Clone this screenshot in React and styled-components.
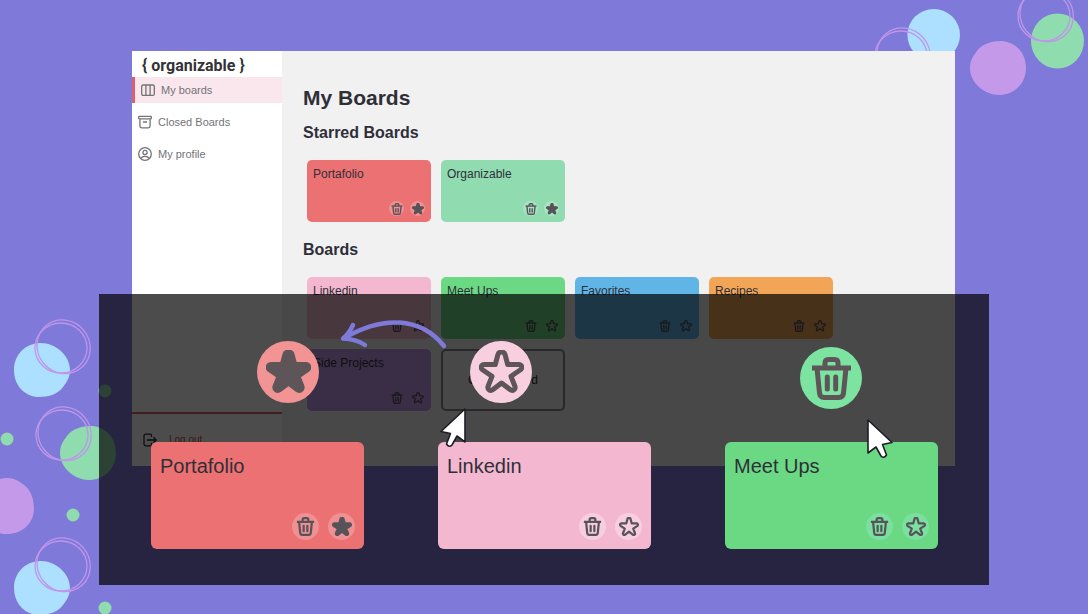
import React from "react";
import styled, { createGlobalStyle, css } from "styled-components";

const GlobalStyle = createGlobalStyle`
  *, *::before, *::after { box-sizing: border-box; }
  body {
    margin: 0;
    background: #7f79d9;
    color: #2f2f38;
    font-family: "Liberation Sans", Arial, sans-serif;
  }
  h1, h2, h3, p { margin: 0; }
`;

const Stage = styled.div`
  position: relative;
  min-height: 100vh;
  padding: 51px 133px 0 132px;
  overflow: hidden;
  background: #7f79d9;
`;

const LeftBubbles = styled.svg`
  position: absolute;
  top: 0;
  left: 0;
`;

const RightBubbles = styled.svg`
  position: absolute;
  top: 0;
  right: 0;
`;

const Window = styled.div`
  position: relative;
  display: flex;
  background: #f1f1f1;
`;

const Sidebar = styled.aside`
  display: flex;
  flex-direction: column;
  flex: 0 0 150px;
  background: #fff;
`;

const Logo = styled.p`
  height: 26px;
  padding: 2px 0 0 10px;
  color: #333336;
  font: 700 16px/26px Roboto, "Liberation Sans", sans-serif;
`;

const Nav = styled.nav`
  display: flex;
  flex-direction: column;
  gap: 6px;
`;

const NavLink = styled.a`
  display: flex;
  align-items: center;
  gap: 6px;
  height: 26px;
  padding-left: 6px;
  color: #737377;
  font-size: 11px;
  line-height: 16px;
  text-decoration: none;
  ${(p) =>
    p.$active &&
    css`
      border-left: 3px solid #dc6069;
      background: #fae7ee;
    `}
`;

const SidebarFooter = styled.div`
  margin-top: auto;
  height: 54px;
  padding: 18px 11px;
  border-top: 2px solid #e0606a;
`;

const LogoutLink = styled.a`
  display: flex;
  align-items: center;
  gap: 12px;
  color: #c9505c;
  font-size: 10px;
  line-height: 16px;
  text-decoration: none;
  svg { color: #2d2d38; }
`;

const Main = styled.main`
  flex: 1;
  min-width: 0;
  padding: 34px 21px 55px;
`;

const PageTitle = styled.h1`
  font-size: 21px;
  line-height: 26px;
  margin-bottom: 12px;
`;

const Section = styled.section`
  & + & { margin-top: 18px; }
`;

const SectionTitle = styled.h2`
  font-size: 16px;
  line-height: 20px;
  margin-bottom: 17px;
`;

const BoardGrid = styled.div`
  display: grid;
  grid-template-columns: repeat(auto-fill, 124px);
  gap: 10px;
  padding-left: 4px;
`;

const Card = styled.article`
  position: relative;
  display: flex;
  flex-direction: column;
  justify-content: space-between;
  height: ${(p) => (p.$large ? 107 : 62)}px;
  padding: ${(p) => (p.$large ? "12px 9px 9px" : "6px")};
  border-radius: ${(p) => (p.$large ? 6 : 5)}px;
  background: ${(p) => p.$color};
`;

const CardTitle = styled.h3`
  font-weight: 400;
  font-size: ${(p) => (p.$large ? 20 : 12)}px;
  line-height: ${(p) => (p.$large ? 24 : 16)}px;
`;

const CardActions = styled.div`
  display: flex;
  justify-content: flex-end;
  gap: ${(p) => (p.$large ? 9 : 6)}px;
`;

const IconButton = styled.button`
  display: grid;
  place-items: center;
  width: ${(p) => (p.$large ? 27 : 15)}px;
  height: ${(p) => (p.$large ? 27 : 15)}px;
  padding: 0;
  border: 0;
  border-radius: 50%;
  background: ${(p) => p.$halo};
  color: #57535a;
`;

const CreateButton = styled.button`
  height: 62px;
  border: 2px solid #86868c;
  border-radius: 5px;
  background: transparent;
  color: #2d2d38;
  font: 12px/16px "Liberation Sans", Arial, sans-serif;
`;

const Spotlight = styled.section`
  position: absolute;
  top: 294px;
  left: 99px;
  right: 99px;
  padding: 148px 51px 36px 52px;
  background: rgba(0, 0, 0, 0.7);
`;

const SpotlightRow = styled.div`
  display: grid;
  grid-template-columns: repeat(3, 1fr);
  gap: 74px;
`;

const Badge = styled.span`
  position: absolute;
  left: ${(p) => p.$left}px;
  bottom: ${(p) => p.$bottom}px;
  display: grid;
  place-items: center;
  width: 62px;
  height: 62px;
  border-radius: 50%;
  background: ${(p) => p.$color};
  color: #5d5558;
`;

const Cursor = styled.svg`
  position: absolute;
  top: ${(p) => p.$top}px;
  left: ${(p) => p.$left}px;
  overflow: visible;
`;

const Arrow = styled.svg`
  position: absolute;
  top: 20px;
  left: 236px;
`;

function StarIcon({ size, filled }) {
  return (
    <svg width={size} height={size} viewBox="0 1.500 45 45" aria-hidden="true">
      <path
        d="M19 5.800C20 2.800 25 2.800 26 5.800L28.700 16L39.500 16C43 16.200 43.800 19.500 41.500 21.300L32 27.800L36 38C36.800 41.300 33.500 43 31 41L22.500 34.500L14 41C11.500 43 8.200 41.300 9 38L13 27.800L3.500 21.300C1.200 19.500 2 16.200 5.500 16L16.300 16Z"
        fill={filled ? "currentColor" : "none"}
        stroke="currentColor"
        strokeWidth="5"
        strokeLinejoin="round"
      />
    </svg>
  );
}

function TrashIcon({ size }) {
  return (
    <svg width={size} height={size} viewBox="-2 0 43 43" fill="none" stroke="currentColor" strokeWidth="5" aria-hidden="true">
      <path d="M0 11H39" />
      <path d="M13 11V6Q13 2.500 16.500 2.500H22.500Q26 2.500 26 6V11" />
      <path d="M5 11L7.500 36Q8 40.500 12 40.500H27Q31 40.500 31.500 36L34 11" />
      <path d="M15.300 20V32M23.700 20V32" strokeLinecap="round" />
    </svg>
  );
}

function BoardsIcon() {
  return (
    <svg width="14" height="14" viewBox="0 0 14 14" fill="none" stroke="currentColor" strokeWidth="1.3" aria-hidden="true">
      <rect x="0.7" y="2" width="12.600" height="10.400" rx="1.500" />
      <path d="M4.900 2V12M9.100 2V12" />
    </svg>
  );
}

function ArchiveIcon() {
  return (
    <svg width="14" height="14" viewBox="0 0 14 14" fill="none" stroke="currentColor" strokeWidth="1.3" aria-hidden="true">
      <rect x="0.7" y="1.300" width="12.600" height="2.600" rx="0.600" />
      <path d="M1.900 4.200V11Q1.900 12.800 3.700 12.800H10.300Q12.100 12.800 12.100 11V4.200M5 7H9" />
    </svg>
  );
}

function ProfileIcon() {
  return (
    <svg width="14" height="14" viewBox="0 0 14 14" fill="none" stroke="currentColor" strokeWidth="1.3" aria-hidden="true">
      <circle cx="7" cy="7" r="6.300" />
      <circle cx="7" cy="5.500" r="2.100" />
      <path d="M2.800 11.300Q4 9.300 7 9.300Q10 9.300 11.200 11.300" />
    </svg>
  );
}

function LogoutIcon() {
  return (
    <svg width="14" height="14" viewBox="0 0 14 14" fill="none" stroke="currentColor" strokeWidth="1.3" aria-hidden="true">
      <path d="M8.500 4V2.700Q8.500 1.200 7 1.200H2.800Q1 1.200 1 3V11Q1 12.800 2.800 12.800H7Q8.500 12.800 8.500 11.300V10M4 7H13M10.500 4.300L13.200 7L10.500 9.700" />
    </svg>
  );
}

function Pointer({ flip, top, left }) {
  return (
    <Cursor $top={top} $left={left} width="26" height="40" viewBox="0 0 26 40" aria-hidden="true">
      <path
        transform={flip ? "translate(26 0) scale(-1 1)" : undefined}
        d="M1 1V34L9 28L14 37Q17 40 19.500 36L15.500 25.500L25 23.500Z"
        fill="#fff"
        stroke="#1d1d26"
        strokeWidth="1.6"
        strokeLinejoin="round"
      />
    </Cursor>
  );
}

const BLOB =
  "M-2-27C13-27.500 28-15 28 0C28 7 25 12 21 17C16 24 7 27-4 27C-18 26-28 15-28 0C-28-15-17-26.500-2-27Z";

function Blob({ x, y, turn = 0, color }) {
  return <path d={BLOB} transform={`translate(${x} ${y}) rotate(${turn})`} fill={color} />;
}

function Rings({ x, y }) {
  return (
    <g fill="none" stroke="#bf96ea" strokeWidth="1.3">
      <ellipse cx={x - 2} cy={y + 2} rx="26" ry="25" />
      <ellipse cx={x + 1} cy={y} rx="27.500" ry="26" transform={`rotate(50 ${x} ${y})`} />
    </g>
  );
}

const BLUE = "#ade0ff";
const MINT = "#8fdcaf";
const LILAC = "#c499ea";

const starred = [
  { name: "Portafolio", color: "#ec7173" },
  { name: "Organizable", color: "#90dcb0" },
];

const boards = [
  { name: "Linkedin", color: "#f3b8d0" },
  { name: "Meet Ups", color: "#6bd984" },
  { name: "Favorites", color: "#61b4e6" },
  { name: "Recipes", color: "#f2a556" },
  { name: "Side Projects", color: "#c39aeb" },
];

function BoardCard({ name, color, filled, large, halo = "transparent", children }) {
  return (
    <Card $color={color} $large={large}>
      <CardTitle $large={large}>{name}</CardTitle>
      <CardActions $large={large}>
        <IconButton type="button" aria-label={`Delete ${name}`} $large={large} $halo={halo}>
          <TrashIcon size={large ? 19 : 12} />
        </IconButton>
        <IconButton type="button" aria-label={`Star ${name}`} $large={large} $halo={halo}>
          <StarIcon size={large ? 20 : 12} filled={filled} />
        </IconButton>
      </CardActions>
      {children}
    </Card>
  );
}

export default function App() {
  return (
    <Stage>
      <GlobalStyle />
      <LeftBubbles width="130" height="620" viewBox="0 0 130 620" aria-hidden="true">
        <Blob x={42} y={370} color={BLUE} />
        <Blob x={88} y={453} turn={180} color={MINT} />
        <Blob x={7} y={506} turn={-90} color={LILAC} />
        <Blob x={42} y={588} color={BLUE} />
        <circle cx="105" cy="391" r="6.500" fill={MINT} />
        <circle cx="7" cy="439" r="6.500" fill={MINT} />
        <circle cx="73" cy="515" r="6.500" fill={MINT} />
        <circle cx="105" cy="608" r="6.500" fill={MINT} />
        <Rings x={63} y={346} />
        <Rings x={64} y={433} />
        <Rings x={63} y={564} />
      </LeftBubbles>
      <RightBubbles width="228" height="110" viewBox="860 0 228 110" aria-hidden="true">
        <ellipse cx="933.700" cy="35" rx="26.300" ry="26" fill={BLUE} />
        <Blob x={998} y={68} turn={180} color={LILAC} />
        <ellipse cx="1057.500" cy="41" rx="26.500" ry="27.500" fill={MINT} />
        <Rings x={903} y={54} />
        <Rings x={1046} y={14} />
      </RightBubbles>

      <Window>
        <Sidebar>
          <Logo>{"{ organizable }"}</Logo>
          <Nav>
            <NavLink href="#boards" $active>
              <BoardsIcon />
              My boards
            </NavLink>
            <NavLink href="#closed">
              <ArchiveIcon />
              Closed Boards
            </NavLink>
            <NavLink href="#profile">
              <ProfileIcon />
              My profile
            </NavLink>
          </Nav>
          <SidebarFooter>
            <LogoutLink href="#logout">
              <LogoutIcon />
              Log out
            </LogoutLink>
          </SidebarFooter>
        </Sidebar>
        <Main>
          <PageTitle>My Boards</PageTitle>
          <Section>
            <SectionTitle>Starred Boards</SectionTitle>
            <BoardGrid>
              {starred.map((b) => (
                <BoardCard key={b.name} {...b} filled halo="rgba(255, 255, 255, 0.22)" />
              ))}
            </BoardGrid>
          </Section>
          <Section>
            <SectionTitle>Boards</SectionTitle>
            <BoardGrid>
              {boards.map((b) => (
                <BoardCard key={b.name} {...b} />
              ))}
              <CreateButton type="button">Create board</CreateButton>
            </BoardGrid>
          </Section>
        </Main>
      </Window>

      <Spotlight>
        <SpotlightRow>
          <BoardCard name="Portafolio" color="#ec7173" large filled halo="#f09092">
            <Badge $left={106} $bottom={146} $color="#f29493">
              <StarIcon size={45} filled />
            </Badge>
          </BoardCard>
          <BoardCard name="Linkedin" color="#f3b8d0" large halo="#f8cedf">
            <Badge $left={32} $bottom={146} $color="#f8cfde">
              <StarIcon size={45} />
            </Badge>
            <Pointer flip top={-34} left={2} />
          </BoardCard>
          <BoardCard name="Meet Ups" color="#6bd984" large halo="#7be09f">
            <Badge $left={75} $bottom={140} $color="#7ce3a0">
              <TrashIcon size={43} />
            </Badge>
            <Pointer top={-23} left={142} />
          </BoardCard>
        </SpotlightRow>
        <Arrow width="120" height="40" viewBox="335 314 120 40" fill="none" stroke="#7f79d9" strokeWidth="4.5" strokeLinecap="round" strokeLinejoin="round" aria-hidden="true">
          <path d="M444 346C420 316 382 316 344 338" />
          <path d="M353 325Q349 334 343 338.500Q356 339 365 345" />
        </Arrow>
      </Spotlight>
    </Stage>
  );
}
